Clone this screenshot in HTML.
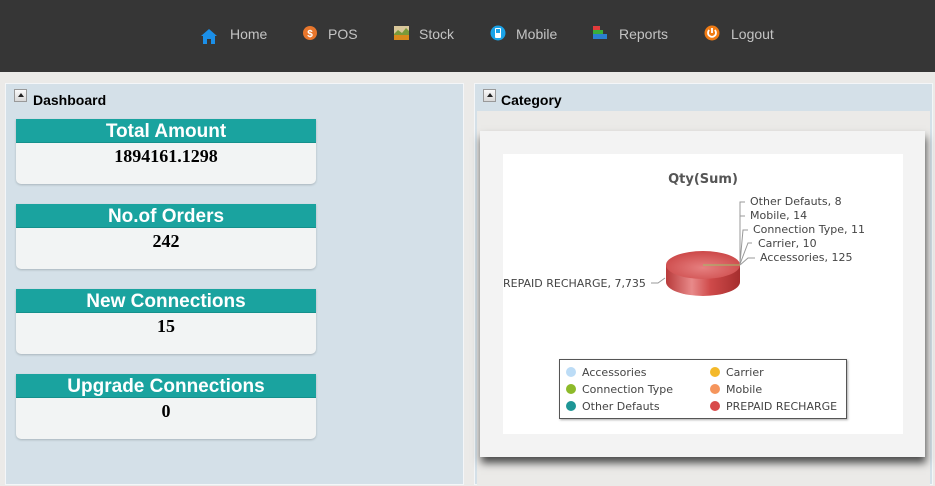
<!DOCTYPE html>
<html><head><meta charset="utf-8"><style>
*{margin:0;padding:0;box-sizing:border-box}
body{width:935px;height:483px;overflow:hidden;background:#ebeae8;font-family:"Liberation Sans",sans-serif;position:relative}
.nav{position:absolute;left:0;top:0;width:935px;height:72px;background:#363636}
.nav .it{position:absolute;top:26px;font-size:14px;color:#c4c4c4;line-height:16px}
.nav svg{position:absolute;top:-1px}
.panel{position:absolute;background:#d4e0e8;border:1px solid #f4f6f8}
.btn{position:absolute;width:13px;height:13px;background:linear-gradient(#fafafa,#d8d8d8);border:1px solid #999}
.btn:after{content:"";position:absolute;left:3px;top:3px;border-left:3px solid transparent;border-right:3px solid transparent;border-bottom:4px solid #222}
.ttl{position:absolute;font-weight:bold;font-size:14px;color:#000}
.card{position:absolute;left:16px;width:300px;height:65px;background:#f2f4f4;border-radius:0 0 5px 5px;box-shadow:0 1px 2px #a8b4bb}
.card .h{height:24px;background:#1aa39f;color:#fff;font-weight:bold;font-size:19px;text-align:center;line-height:26px;border-bottom:1px solid #15908c}
.card .v{text-align:center;font-family:"Liberation Serif",serif;font-weight:bold;font-size:18px;line-height:24px;margin-top:1px}
.lbl{font-family:"DejaVu Sans",sans-serif;font-size:11px;fill:#444}
</style></head><body>
<div class="nav">
 <div class="it" style="left:200px"><svg width="18" height="18" viewBox="0 0 18 18" style="left:0;top:1px"><path d="M9 2 L1 9 H3 V17 H7 V12 H11 V17 H15 V9 H17 Z" fill="#1b8fe8"/></svg><span style="margin-left:30px">Home</span></div>
 <div class="it" style="left:302px"><svg width="16" height="16" viewBox="0 0 16 16" style="left:0"><circle cx="8" cy="8" r="7" fill="#e8762c"/><text x="8" y="12" font-size="10" fill="#fff" text-anchor="middle" font-family="Liberation Sans" font-weight="bold">$</text></svg><span style="margin-left:26px">POS</span></div>
 <div class="it" style="left:394px"><svg width="16" height="16" viewBox="0 0 16 16" style="left:0"><rect x="0" y="1" width="15" height="14" fill="#d9c79a"/><path d="M0 9 L4 5 L8 8 L12 3 L15 6 V15 H0Z" fill="#7a9a3a"/><rect x="0" y="10" width="15" height="5" fill="#d98a1c"/></svg><span style="margin-left:25px">Stock</span></div>
 <div class="it" style="left:490px"><svg width="16" height="16" viewBox="0 0 16 16" style="left:0"><circle cx="8" cy="8" r="7.5" fill="#1aa3e8"/><rect x="5" y="3" width="6" height="10" rx="1" fill="#fff"/><rect x="6" y="4" width="4" height="4" fill="#1aa3e8"/></svg><span style="margin-left:26px">Mobile</span></div>
 <div class="it" style="left:592px"><svg width="16" height="16" viewBox="0 0 16 16" style="left:0"><rect x="1" y="1" width="7" height="4" fill="#e23b3b"/><rect x="1" y="5" width="10" height="4" fill="#3aae3a"/><rect x="1" y="9" width="14" height="5" fill="#2a7fd0"/></svg><span style="margin-left:27px">Reports</span></div>
 <div class="it" style="left:704px"><svg width="16" height="16" viewBox="0 0 16 16" style="left:0"><circle cx="8" cy="8" r="7.5" fill="#f07b14"/><path d="M5.2 5 A4 4 0 1 0 10.8 5" stroke="#fff" stroke-width="1.8" fill="none"/><path d="M8 3 V8" stroke="#fff" stroke-width="1.8"/></svg><span style="margin-left:27px">Logout</span></div>
</div>

<div class="panel" style="left:5px;top:83px;width:459px;height:402px">
 <div class="btn" style="left:8px;top:5px"></div>
 <div class="ttl" style="left:27px;top:8px">Dashboard</div>
</div>
<div class="card" style="top:119px"><div class="h">Total Amount</div><div class="v">1894161.1298</div></div>
<div class="card" style="top:204px"><div class="h">No.of Orders</div><div class="v">242</div></div>
<div class="card" style="top:289px"><div class="h">New Connections</div><div class="v">15</div></div>
<div class="card" style="top:374px"><div class="h">Upgrade Connections</div><div class="v">0</div></div>

<div class="panel" style="left:474px;top:83px;width:459px;height:402px">
 <div class="btn" style="left:8px;top:5px"></div>
 <div class="ttl" style="left:26px;top:8px">Category</div>
 <div style="position:absolute;left:2px;top:27px;width:453px;height:375px;background:#ebeae8"></div>
</div>
<div style="position:absolute;left:480px;top:131px;width:445px;height:326px;background:#f3f3f3;box-shadow:1px 6px 8px #4a4a4a"></div>
<div style="position:absolute;left:503px;top:154px;width:400px;height:280px;background:#fff"></div>
<svg style="position:absolute;left:0;top:0" width="935" height="483">
 <defs>
  <linearGradient id="side" x1="0" x2="1"><stop offset="0" stop-color="#b83a3a"/><stop offset=".35" stop-color="#e88a8a"/><stop offset=".6" stop-color="#cf4a4a"/><stop offset="1" stop-color="#a52e2e"/></linearGradient>
  <radialGradient id="top" cx=".5" cy=".6" r=".6"><stop offset="0" stop-color="#e68080"/><stop offset="1" stop-color="#cc4848"/></radialGradient>
 </defs>
 <text x="703" y="183" text-anchor="middle" font-family="DejaVu Sans" font-weight="bold" font-size="13" fill="#555">Qty(Sum)</text>
 <path d="M666 265 V282 A37 14 0 0 0 740 282 V265 Z" fill="url(#side)"/>
 <ellipse cx="703" cy="265" rx="37" ry="14" fill="url(#top)"/>
 <path d="M703 265 L740 265" stroke="#9dbf6a" stroke-width="1"/>
 <g stroke="#999" fill="none" stroke-width="1">
  <path d="M740 263 V202 H745"/><path d="M740 216 H745"/><path d="M740 263 L743 230 H748"/><path d="M740 264 L748 243 H752"/><path d="M740 265 L748 258 H755"/>
  <path d="M665 278 L658 283 H651"/>
 </g>
 <text class="lbl" x="750" y="205">Other Defauts, 8</text>
 <text class="lbl" x="750" y="219">Mobile, 14</text>
 <text class="lbl" x="753" y="233">Connection Type, 11</text>
 <text class="lbl" x="758" y="247">Carrier, 10</text>
 <text class="lbl" x="760" y="261">Accessories, 125</text>
 <text class="lbl" x="503" y="287">REPAID RECHARGE, 7,735</text>
 <rect x="559.5" y="359.5" width="287" height="59" fill="#fff" stroke="#555" style="filter:drop-shadow(1px 1px 1px #aaa)"/>
 <g font-family="DejaVu Sans" font-size="11" fill="#444">
  <circle cx="571" cy="372" r="5" fill="#bcdcf6"/><text x="582" y="376">Accessories</text>
  <circle cx="571" cy="389" r="5" fill="#8dba2a"/><text x="582" y="393">Connection Type</text>
  <circle cx="571" cy="406" r="5" fill="#1e9696"/><text x="582" y="410">Other Defauts</text>
  <circle cx="715" cy="372" r="5" fill="#f4b92a"/><text x="726" y="376">Carrier</text>
  <circle cx="715" cy="389" r="5" fill="#f5955c"/><text x="726" y="393">Mobile</text>
  <circle cx="715" cy="406" r="5" fill="#d84a4a"/><text x="726" y="410">PREPAID RECHARGE</text>
 </g>
</svg>
</body></html>
